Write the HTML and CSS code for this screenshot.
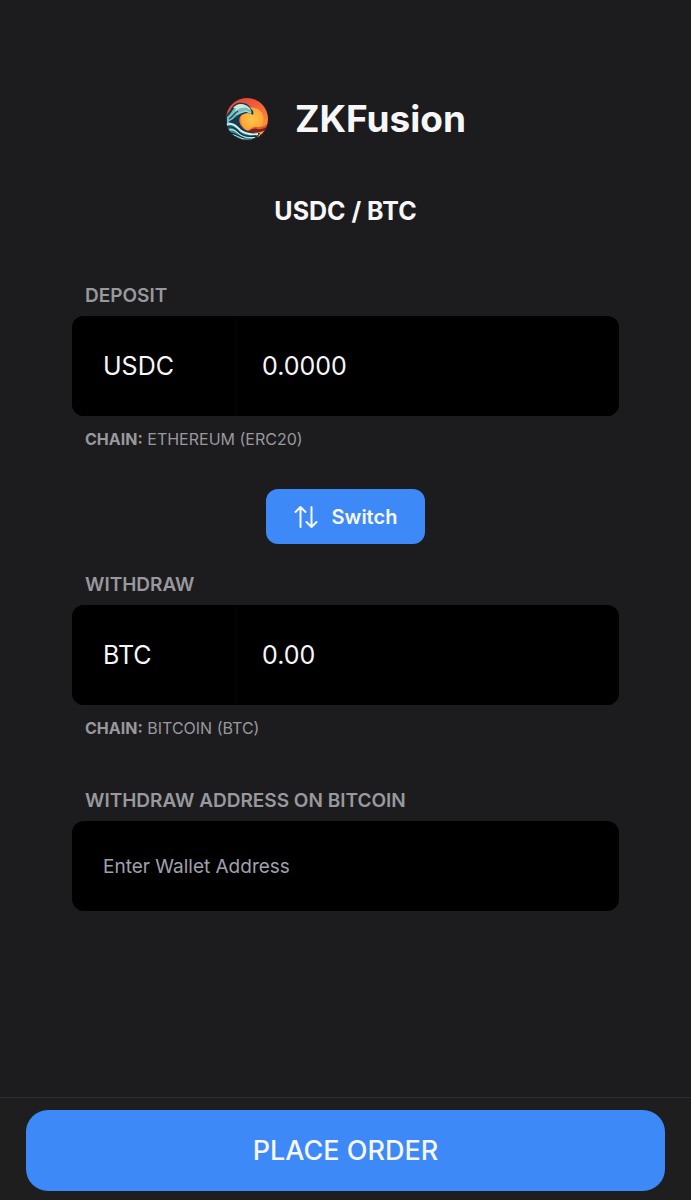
FILE: index.html
```html
<!DOCTYPE html>
<html lang="en">
<head>
<meta charset="utf-8">
<meta name="viewport" content="width=device-width, initial-scale=1">
<title>ZKFusion</title>
<link rel="stylesheet" href="styles.css">
</head>
<body>
<main class="page">
  <header class="brand">
    <svg class="brand-logo" viewBox="0 0 44 44" aria-hidden="true">
      <defs>
        <linearGradient id="sky" x1="0" y1="0" x2="0.5" y2="1">
          <stop offset="0" stop-color="#d93a35"/>
          <stop offset="0.45" stop-color="#f4603a"/>
          <stop offset="1" stop-color="#f9a03c"/>
        </linearGradient>
        <radialGradient id="sun">
          <stop offset="0" stop-color="#ffc64b"/>
          <stop offset="1" stop-color="#fba535"/>
        </radialGradient>
        <clipPath id="disc"><circle cx="22" cy="22" r="21.5"/></clipPath>
      </defs>
      <g clip-path="url(#disc)">
        <path fill="url(#sky)" d="M0 0h44v44H0z"/>
        <circle cx="27" cy="22" r="11.500" fill="url(#sun)"/>
        <path fill="#df5a2a" d="M20 34c6-1 8-5 12-4 5 1 8-2 12-4v12H18z"/>
        <path fill="#7e1f22" d="M19 35c6 0 9-5 13-3 4 1 7-1 12-3l-2 7-12 3H18z"/>
        <path fill="#f2a04a" d="M27 36c5-1 10 0 15-4l-2 4c-4 2-8 2-13 2z"/>
        <path fill="#133a50" d="M0 20c3-4 5-6 7-10 3-4 7-5 11-4 4 0 7 3 8 6 2 1 3 3 2 6-2-2-3-1-5-2-3 0-6 1-8 4-2 4 0 8 4 12 4 3 10 4 16 4l-5 8H0z"/>
        <path fill="#79bcbd" d="M2 20c4-3 5-7 9-11 4-3 10-2 14 2l2 5c-3-2-7-1-10 0-6 2-6 6-11 9-1 1-3 2-4 2z"/>
        <path fill="#cfe5d9" d="M8 11c3-4 8-5 12-3 3 1 5 3 5 5-3-3-5-3-8-2-3 0-5 2-7 4l1-4z"/>
        <path fill="none" stroke="#a4d3cf" stroke-width="1.400" d="M12 18c3-3 6-3 9-4l5 2"/>
        <path fill="none" stroke="#184c5e" stroke-width="1.200" d="M4 22c4-2 5-6 9-8M9 22c2-3 4-4 8-5"/>
        <path fill="#2f8c98" d="M0 27c6-1 10 1 14 5 6 5 12 5 19 5l-7 7H6z"/>
        <path fill="none" stroke="#e4efe2" stroke-width="1.800" d="M1 28c7-3 10 1 14 5 5 4 10 5 18 4"/>
        <path fill="none" stroke="#c8e2d9" stroke-width="1.300" d="M3 33c7-2 9 3 14 6 4 2 8 2 13 1M7 38c5-1 8 3 12 4"/>
        <path fill="none" stroke="#102c3d" stroke-width="1.300" d="M2 30c6-1 9 2 13 6 4 3 9 4 16 3M5 36c5 0 8 3 14 5M4 25c3-1 5-3 7-4"/>
      </g>
      <circle cx="22" cy="22" r="21.500" fill="none" stroke="#24171a" stroke-width="1"/>
    </svg>
    <h1 class="brand-name">ZKFusion</h1>
  </header>
  <h2 class="pair">USDC / BTC</h2>

  <form class="order" id="order">
    <section class="group">
      <label class="label" for="deposit">DEPOSIT</label>
      <div class="field">
        <select class="token" aria-label="Deposit token"><option>USDC</option><option>BTC</option></select>
        <input class="amount" id="deposit" type="text" inputmode="decimal" value="0.0000">
      </div>
      <p class="chain"><strong>CHAIN:</strong> ETHEREUM (ERC20)</p>
    </section>

    <button class="switch" type="button">
      <svg class="switch-icon" viewBox="0 0 24 24" aria-hidden="true">
        <path d="M6.500 22V2M1.500 7l5-5 5 5M17.500 2v20M12.500 17l5 5 5-5"/>
      </svg>
      Switch
    </button>

    <section class="group">
      <label class="label" for="withdraw">WITHDRAW</label>
      <div class="field">
        <select class="token" aria-label="Withdraw token"><option>BTC</option><option>USDC</option></select>
        <input class="amount" id="withdraw" type="text" inputmode="decimal" value="0.00">
      </div>
      <p class="chain"><strong>CHAIN:</strong> BITCOIN (BTC)</p>
    </section>

    <section class="group address-group">
      <label class="label" for="address">WITHDRAW ADDRESS ON BITCOIN</label>
      <input class="address" id="address" type="text" placeholder="Enter Wallet Address">
    </section>
  </form>
</main>
<footer class="bar">
  <button class="submit" type="submit" form="order">PLACE ORDER</button>
</footer>
</body>
</html>
```

FILE: styles.css
```css
* { box-sizing: border-box; }

body {
  margin: 0;
  min-height: 100vh;
  display: flex;
  flex-direction: column;
  background: #1c1c1e;
  color: #f7f7f9;
  font-family: Inter, "Liberation Sans", sans-serif;
}

h1, h2, p { margin: 0; }

button, input, select {
  font: inherit;
  color: inherit;
  border: 0;
  margin: 0;
}

.page {
  flex: 1;
  padding: 96px 72px 40px;
}

.brand {
  display: flex;
  align-items: center;
  justify-content: center;
  gap: 26px;
}

.brand-logo { width: 44px; height: 44px; }

.brand-name {
  font-size: 37px;
  line-height: 46px;
  font-weight: 700;
}

.pair {
  margin-top: 53px;
  text-align: center;
  font-size: 25px;
  line-height: 32px;
  font-weight: 700;
}

.order {
  display: flex;
  flex-direction: column;
  margin-top: 57px;
}

.group {
  display: flex;
  flex-direction: column;
}

.label {
  padding: 0 13px;
  margin-bottom: 8px;
  color: #98989d;
  font-size: 19px;
  line-height: 24px;
  font-weight: 600;
}

.field {
  display: flex;
  height: 100px;
  background: #000;
  border-radius: 12px;
  overflow: hidden;
}

.token {
  appearance: none;
  width: 30%;
  padding: 0 0 0 31px;
  background: #000;
  border-right: 1px solid #040404;
  border-radius: 0;
  font-size: 25px;
}

.amount {
  flex: 1;
  min-width: 0;
  padding: 0 26px;
  background: #000;
  font-size: 25px;
}

.chain {
  padding: 0 13px;
  margin-top: 11px;
  color: #98989d;
  font-size: 16px;
  line-height: 24px;
}

.chain strong { font-weight: 700; }

.switch {
  align-self: center;
  display: flex;
  align-items: center;
  gap: 14px;
  height: 55px;
  margin: 38px 0 29px;
  padding: 0 28px;
  border-radius: 12px;
  background: #3d89f7;
  font-size: 20px;
  font-weight: 600;
}

.switch-icon {
  width: 24px;
  height: 24px;
  fill: none;
  stroke: currentColor;
  stroke-width: 2;
  stroke-linecap: round;
  stroke-linejoin: round;
}

.address-group { margin-top: 49px; }

.address {
  width: 100%;
  height: 90px;
  padding: 0 31px;
  background: #000;
  border-radius: 12px;
  font-size: 19px;
}

.address::placeholder { color: #a0a0ac; opacity: 1; }

.bar {
  padding: 12px 26px 9px;
  border-top: 1px solid #2e2e2f;
  background: #1e1e1e;
}

.submit {
  display: block;
  width: 100%;
  height: 81px;
  border-radius: 22px;
  background: #3d89f7;
  font-size: 27px;
  font-weight: 500;
}
```
